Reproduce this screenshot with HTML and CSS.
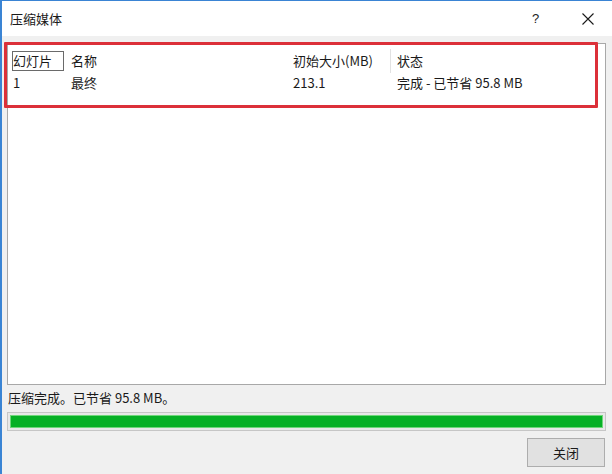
FILE: index.html
```html
<!DOCTYPE html>
<html lang="zh-CN">
<head>
<meta charset="utf-8">
<title>压缩媒体</title>
<link rel="stylesheet" href="styles.css">
</head>
<body>
<div class="window">
  <div class="titlebar">
    <span class="title">压缩媒体</span>
    <span class="help">?</span>
    <span class="close">
      <svg width="12" height="12" viewBox="0 0 12 12"><path d="M0.5 0.5 L11.5 11.5 M11.5 0.5 L0.5 11.5" stroke="#1a1a1a" stroke-width="1.1" fill="none"/></svg>
    </span>
  </div>
  <div class="content">
    <div class="listbox">
      <div class="row head">
        <div class="c1"><span class="focus">幻灯片</span></div>
        <div class="c2">名称</div>
        <div class="c3">初始大小(MB)</div>
        <div class="c4 sep">状态</div>
      </div>
      <div class="row">
        <div class="c1"><span class="cell1">1</span></div>
        <div class="c2">最终</div>
        <div class="c3">213.1</div>
        <div class="c4">完成 - 已节省 95.8 MB</div>
      </div>
      <div class="highlight"></div>
    </div>
    <div class="status">压缩完成。已节省 95.8 MB。</div>
    <div class="progress"><div class="fill"></div></div>
    <div class="actions"><button class="btn">关闭</button></div>
  </div>
</div>
</body>
</html>
```
FILE: styles.css
```css
html, body {
  margin: 0;
  padding: 0;
}
body {
  width: 612px;
  height: 474px;
  overflow: hidden;
  font-family: "Noto Sans CJK SC", "Microsoft YaHei", sans-serif;
  font-size: 13px;
  color: #1a1a1a;
}
.window {
  box-sizing: border-box;
  width: 612px;
  height: 474px;
  border-left: 2px solid #3a84d4;
  border-top: 1px solid #3a84d4;
  background: #f0f0f0;
  display: flex;
  flex-direction: column;
}
.titlebar {
  height: 35px;
  background: #ffffff;
  display: flex;
  align-items: center;
  padding-left: 8px;
}
.title {
  flex: 1;
  line-height: 16px;
  font-size: 13px;
}
.help {
  font-family: "Liberation Sans", sans-serif;
  font-size: 13px;
  width: 10px;
  margin-right: 40px;
  color: #222;
}
.close {
  display: flex;
  width: 12px;
  height: 12px;
  margin-right: 18px;
}
.content {
  flex: 1;
  display: flex;
  flex-direction: column;
  padding: 7px 6px 0 5px;
}
.listbox {
  position: relative;
  height: 342px;
  box-sizing: border-box;
  background: #ffffff;
  border: 1px solid #a8a8a8;
  padding: 5px 0 0 4px;
}
.row {
  display: grid;
  grid-template-columns: 59px 222px 97px 1fr;
  height: 20px;
  align-items: center;
  line-height: 18px;
}
.row + .row {
  margin-top: 4px;
}
.c4 {
  border-left: 1px solid transparent;
  padding-left: 6px;
  height: 20px;
  display: flex;
  align-items: center;
}
.c4.sep {
  border-left-color: #e2e2e2;
  height: 24px;
}
.focus {
  display: inline-block;
  border: 1px solid #6a6a6a;
  width: 50px;
  height: 18px;
  line-height: 18px;
  box-sizing: content-box;
}
.cell1 {
  padding-left: 1px;
}
.highlight {
  position: absolute;
  left: -4px;
  top: -2px;
  width: 594px;
  height: 66px;
  box-sizing: border-box;
  border: 3px solid #dc3039;
  border-radius: 1px;
  pointer-events: none;
}
.status {
  margin-top: 5px;
  height: 16px;
  line-height: 16px;
  padding-left: 1px;
}
.progress {
  margin-top: 6px;
  height: 19px;
  box-sizing: border-box;
  border: 1px solid #c6c6c6;
  background: #e8e8e8;
  padding: 2px;
}
.fill {
  height: 13px;
  box-sizing: border-box;
  background: #06b025;
  border: 1px solid #6fd77a;
}
.actions {
  display: flex;
  justify-content: flex-end;
  margin-top: 7px;
  padding-right: 1px;
}
.btn {
  width: 78px;
  height: 29px;
  background: #e1e1e1;
  border: 1px solid #adadad;
  font-family: "Noto Sans CJK SC", sans-serif;
  font-size: 13px;
  color: #1a1a1a;
  padding: 0;
}
```
